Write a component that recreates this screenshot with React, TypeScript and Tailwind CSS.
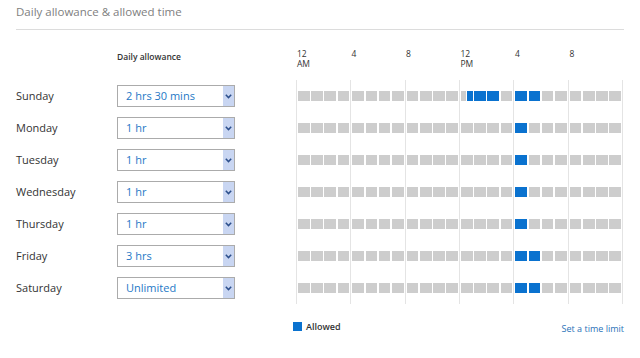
import React from "react";

const days: { name: string; value: string; allowed: number[] }[] = [
  { name: "Sunday", value: "2 hrs 30 mins", allowed: [25, 26, 27, 28, 29, 32, 33, 34, 35] },
  { name: "Monday", value: "1 hr", allowed: [32, 33] },
  { name: "Tuesday", value: "1 hr", allowed: [32, 33] },
  { name: "Wednesday", value: "1 hr", allowed: [32, 33] },
  { name: "Thursday", value: "1 hr", allowed: [32, 33] },
  { name: "Friday", value: "3 hrs", allowed: [32, 33, 34, 35] },
  { name: "Saturday", value: "Unlimited", allowed: [32, 33, 34, 35] },
];

const font = { fontFamily: '"Open Sans", "Noto Sans", sans-serif' };

function Block({ a, b }: { a: boolean; b: boolean }) {
  if (a === b) {
    return <div className={`flex-1 h-[10px] ${a ? "bg-[#0a72cf]" : "bg-[#cdcdcd]"}`} />;
  }
  return (
    <div className="flex-1 flex gap-[1px] h-[10px]">
      <div className={`flex-1 ${a ? "bg-[#0a72cf]" : "bg-[#cdcdcd]"}`} />
      <div className={`flex-1 ${b ? "bg-[#0a72cf]" : "bg-[#cdcdcd]"}`} />
    </div>
  );
}

function Chevron() {
  return (
    <svg width="7" height="5" viewBox="0 0 7 5">
      <path d="M0.8 0.8 L3.5 3.6 L6.2 0.8" fill="none" stroke="#2c4f8c" strokeWidth="1.5" />
    </svg>
  );
}

export default function App() {
  const labels = [
    ["12", "AM"],
    ["4", ""],
    ["8", ""],
    ["12", "PM"],
    ["4", ""],
    ["8", ""],
  ];
  return (
    <div className="w-[640px] h-[358px] bg-white overflow-hidden" style={font}>
      <div className="px-4">
        <div className="h-[30px] border-b border-[#dcdcdc] pt-[3px] text-[11.5px] text-[#808080]">
          Daily allowance &amp; allowed time
        </div>
        {/* header row */}
        <div className="flex h-[50px] items-start">
          <div className="w-[101px]" />
          <div className="w-[118px] pt-[21px] text-[8.5px] font-semibold text-[#333]">Daily allowance</div>
          <div className="w-[61px]" />
          <div className="w-[327px] flex pt-[19px]">
            {labels.map(([a, b], i) => (
              <div key={i} className="flex-1 pl-[1px] text-[8.5px] leading-[10px] text-[#333]">
                <div>{a}</div>
                <div>{b}</div>
              </div>
            ))}
          </div>
        </div>
        {/* rows */}
        {days.map((d) => (
          <div key={d.name} className="flex h-[32px] items-center">
            <div className="w-[101px] text-[11px] text-[#333]">{d.name}</div>
            <div className="w-[118px] h-[22px] border border-[#ababab] flex items-stretch bg-white">
              <div className="flex-1 pl-[8px] flex items-center text-[11px] text-[#2578c6]">{d.value}</div>
              <div className="w-[11px] bg-[#c9d6f2] flex items-center justify-center">
                <Chevron />
              </div>
            </div>
            <div className="w-[61px]" />
            <div className="w-[327px] h-full flex border-r border-[#e4e4e4]">
              {[0, 1, 2, 3, 4, 5].map((s) => (
                <div key={s} className="flex-1 border-l border-[#e4e4e4] flex items-center gap-[1.5px] px-[1px]">
                  {[0, 1, 2, 3].map((k) => {
                    const h = s * 4 + k;
                    return (
                      <Block key={k} a={d.allowed.includes(h * 2)} b={d.allowed.includes(h * 2 + 1)} />
                    );
                  })}
                </div>
              ))}
            </div>
          </div>
        ))}
        {/* legend */}
        <div className="flex items-center mt-[14px]">
          <div className="w-[277px]" />
          <div className="w-[9px] h-[9px] bg-[#0a72cf]" />
          <div className="ml-[4px] text-[9px] font-semibold text-[#333]">Allowed</div>
          <div className="flex-1 text-right text-[9px] text-[#2a72b8] pt-[4px]">Set a time limit</div>
        </div>
      </div>
    </div>
  );
}
